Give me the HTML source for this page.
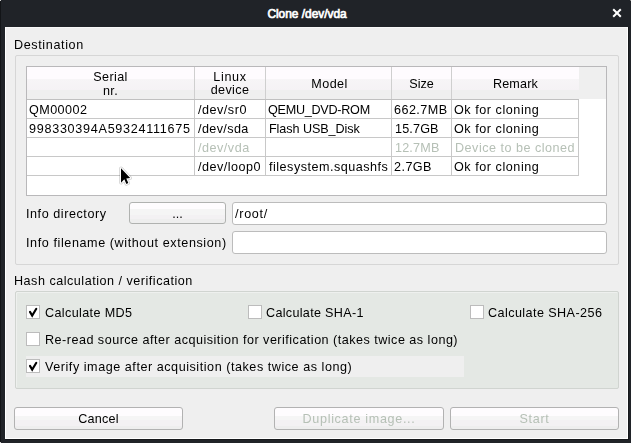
<!DOCTYPE html>
<html><head><meta charset="utf-8"><style>
html,body{margin:0;padding:0;}
body{width:631px;height:443px;background:#202328;position:relative;overflow:hidden;font-family:"Liberation Sans",sans-serif;}
.b{position:absolute;}
#title{will-change:auto;}
.t{will-change:transform;position:absolute;white-space:pre;line-height:14px;font-size:12px;}
</style></head><body>
<div class="b" style="left:5px;top:27px;width:623px;height:412px;background:#efefef;border-left:1px solid #fff;border-top:1px solid #f8f8f8;border-right:1px solid #fff;border-bottom:1px solid #fff;box-sizing:border-box;"></div>
<div class="b" style="left:0px;top:0px;width:1px;height:443px;background:#121417;"></div>
<div class="b" style="left:628px;top:27px;width:1px;height:413px;background:#16181b;"></div>
<div class="b" style="left:5px;top:439px;width:624px;height:1px;background:#16181b;"></div>
<div class="b" style="left:0px;top:0px;width:1px;height:1px;background:#d0d0d0;"></div>
<div class="b" style="left:0px;top:442px;width:1px;height:1px;background:#d0d0d0;"></div>
<div class="b" style="left:630px;top:0px;width:1px;height:1px;background:#808080;"></div>
<div class="b" style="left:15px;top:55px;width:604px;height:210px;border:1px solid #d6d6d6;border-radius:2px;box-sizing:border-box;"></div>
<div class="b" style="left:26px;top:66px;width:581px;height:130px;border:1px solid #b9b8ba;box-sizing:border-box;background:#fff;"></div>
<div class="b" style="left:27px;top:67px;width:579px;height:32px;background:#efefef;"></div>
<div class="b" style="left:27px;top:67px;width:167px;height:32px;background:linear-gradient(#fefbfe 0px,#fefbfe 12px,#f7f5f7 12px,#f5f2f5 23px,#efefef 23px);"></div>
<div class="b" style="left:194px;top:67px;width:1px;height:32px;background:#cfcfcf;"></div>
<div class="b" style="left:195px;top:67px;width:70px;height:32px;background:linear-gradient(#fefbfe 0px,#fefbfe 12px,#f7f5f7 12px,#f5f2f5 23px,#efefef 23px);"></div>
<div class="b" style="left:265px;top:67px;width:1px;height:32px;background:#cfcfcf;"></div>
<div class="b" style="left:266px;top:67px;width:125px;height:32px;background:linear-gradient(#fefbfe 0px,#fefbfe 12px,#f7f5f7 12px,#f5f2f5 23px,#efefef 23px);"></div>
<div class="b" style="left:391px;top:67px;width:1px;height:32px;background:#cfcfcf;"></div>
<div class="b" style="left:392px;top:67px;width:59px;height:32px;background:linear-gradient(#fefbfe 0px,#fefbfe 12px,#f7f5f7 12px,#f5f2f5 23px,#efefef 23px);"></div>
<div class="b" style="left:451px;top:67px;width:1px;height:32px;background:#cfcfcf;"></div>
<div class="b" style="left:452px;top:67px;width:127px;height:32px;background:linear-gradient(#fefbfe 0px,#fefbfe 12px,#f7f5f7 12px,#f5f2f5 23px,#efefef 23px);"></div>
<div class="b" style="left:27px;top:99px;width:552px;height:1px;background:#c0c0c0;"></div>
<div class="b" style="left:27px;top:118px;width:552px;height:1px;background:#c8c8c8;"></div>
<div class="b" style="left:27px;top:137px;width:552px;height:1px;background:#c8c8c8;"></div>
<div class="b" style="left:27px;top:156px;width:552px;height:1px;background:#c8c8c8;"></div>
<div class="b" style="left:27px;top:175px;width:552px;height:1px;background:#c8c8c8;"></div>
<div class="b" style="left:194px;top:100px;width:1px;height:76px;background:#c8c8c8;"></div>
<div class="b" style="left:265px;top:100px;width:1px;height:76px;background:#c8c8c8;"></div>
<div class="b" style="left:391px;top:100px;width:1px;height:76px;background:#c8c8c8;"></div>
<div class="b" style="left:451px;top:100px;width:1px;height:76px;background:#c8c8c8;"></div>
<div class="b" style="left:578px;top:100px;width:1px;height:76px;background:#c8c8c8;"></div>
<div class="b" style="left:129px;top:202px;width:97px;height:22px;border:1px solid #b0b2b0;border-radius:3px;box-sizing:border-box;background:linear-gradient(#fefcfe 0,#fefcfe 32%,#f5f5f5 32%,#f5f5f5 58%,#f3f1f3 58%,#f3f1f3 80%,#eeeeee 80%);"></div>
<div class="b" style="left:232px;top:202px;width:375px;height:23px;border:1px solid #bcbcbc;border-radius:3px;box-sizing:border-box;background:#fff;"></div>
<div class="b" style="left:232px;top:231px;width:375px;height:23px;border:1px solid #bcbcbc;border-radius:3px;box-sizing:border-box;background:#fff;"></div>
<div class="b" style="left:15px;top:291px;width:604px;height:98px;border:1px solid #d0d4d0;border-radius:2px;box-sizing:border-box;background:#e4e8e4;box-shadow:inset 1px 1px 0 #eef0ee;"></div>
<div class="b" style="left:26px;top:356px;width:438px;height:21px;background:#efefef;"></div>
<div class="b" style="left:26px;top:305px;width:14px;height:14px;border:1px solid #bcbcbc;box-sizing:border-box;background:#fff;"></div><svg class="b" style="left:26px;top:305px" width="14" height="14" viewBox="0 0 14 14"><path d="M4 6.9 L6.2 10.6 L10.3 3.8" fill="none" stroke="#000" stroke-width="2.1" stroke-linecap="round" stroke-linejoin="miter"/></svg>
<div class="b" style="left:248px;top:305px;width:14px;height:14px;border:1px solid #bcbcbc;box-sizing:border-box;background:#fff;"></div>
<div class="b" style="left:470px;top:305px;width:14px;height:14px;border:1px solid #bcbcbc;box-sizing:border-box;background:#fff;"></div>
<div class="b" style="left:26px;top:332px;width:14px;height:14px;border:1px solid #bcbcbc;box-sizing:border-box;background:#fff;"></div>
<div class="b" style="left:26px;top:359px;width:14px;height:14px;border:1px solid #bcbcbc;box-sizing:border-box;background:#fff;"></div><svg class="b" style="left:26px;top:359px" width="14" height="14" viewBox="0 0 14 14"><path d="M4 6.9 L6.2 10.6 L10.3 3.8" fill="none" stroke="#000" stroke-width="2.1" stroke-linecap="round" stroke-linejoin="miter"/></svg>
<div class="b" style="left:14px;top:407px;width:169px;height:23px;border:1px solid #b2b2b2;border-radius:3px;box-sizing:border-box;background:linear-gradient(#fefcfe 0,#fefcfe 37%,#f5f5f5 37%,#f5f5f5 59%,#f3f1f3 59%,#f3f1f3 84%,#eeeeee 84%);"></div>
<div class="b" style="left:274px;top:407px;width:170px;height:23px;border:1px solid #b2b2b2;border-radius:3px;box-sizing:border-box;background:linear-gradient(#fefcfe 0,#fefcfe 37%,#f5f5f5 37%,#f5f5f5 59%,#f3f1f3 59%,#f3f1f3 84%,#eeeeee 84%);"></div>
<div class="b" style="left:450px;top:407px;width:169px;height:23px;border:1px solid #b2b2b2;border-radius:3px;box-sizing:border-box;background:linear-gradient(#fefcfe 0,#fefcfe 37%,#f5f5f5 37%,#f5f5f5 59%,#f3f1f3 59%,#f3f1f3 84%,#eeeeee 84%);"></div>
<svg class="b" style="left:611px;top:7px" width="12" height="12" viewBox="0 0 12 12"><path d="M2.2 2.2 L9.8 9.8 M9.8 2.2 L2.2 9.8" stroke="#fff" stroke-width="2" stroke-linecap="butt"/></svg>
<svg class="b" style="left:115px;top:162px" width="24" height="28" viewBox="0 0 24 28"><path d="M6 6.3 L6 20.8 L9.3 17.3 L11.4 21.9 L13.3 21 L11.3 16.5 L15.2 16 Z" fill="none" stroke="rgba(0,0,0,0.18)" stroke-width="3.6" stroke-linejoin="round"/><path d="M6 6.3 L6 20.8 L9.3 17.3 L11.4 21.9 L13.3 21 L11.3 16.5 L15.2 16 Z" fill="#000" stroke="#fff" stroke-width="2" paint-order="stroke" stroke-linejoin="round"/></svg>
<div class="t" id="title" style="top:7.00px;color:#fff;font-size:11.9px;font-weight:normal;-webkit-text-stroke:0.7px #fff;left:267.40px;">Clone /dev/vda</div>
<div class="t" id="dest" style="top:38.00px;color:#000;font-size:12.6px;font-weight:normal;letter-spacing:0.620px;left:14.00px;">Destination</div>
<div class="t" id="h_serial" style="top:69.50px;color:#000;font-size:12.6px;font-weight:normal;letter-spacing:0.360px;left:27.00px;width:167px;text-align:center;">Serial</div>
<div class="t" id="h_nr" style="top:84.00px;color:#000;font-size:12.6px;font-weight:normal;letter-spacing:0.400px;left:27.40px;width:167px;text-align:center;">nr.</div>
<div class="t" id="h_linux" style="top:70.00px;color:#000;font-size:12.6px;font-weight:normal;letter-spacing:0.650px;left:195.40px;width:70px;text-align:center;">Linux</div>
<div class="t" id="h_device" style="top:83.00px;color:#000;font-size:12.6px;font-weight:normal;letter-spacing:0.360px;left:195.00px;width:70px;text-align:center;">device</div>
<div class="t" id="h_model" style="top:77.00px;color:#000;font-size:12.6px;font-weight:normal;letter-spacing:0.425px;left:266.85px;width:125px;text-align:center;">Model</div>
<div class="t" id="h_size" style="top:77.00px;color:#000;font-size:12.6px;font-weight:normal;left:392.00px;width:59px;text-align:center;">Size</div>
<div class="t" id="h_remark" style="top:77.00px;color:#000;font-size:12.6px;font-weight:normal;letter-spacing:0.180px;left:452.45px;width:127px;text-align:center;">Remark</div>
<div class="t" id="r0c0" style="top:103.00px;color:#000;font-size:12.6px;font-weight:normal;letter-spacing:0.433px;left:29.10px;">QM00002</div>
<div class="t" id="r0c1" style="top:103.00px;color:#000;font-size:12.6px;font-weight:normal;letter-spacing:0.514px;left:197.50px;">/dev/sr0</div>
<div class="t" id="r0c2" style="top:103.00px;color:#000;font-size:12.6px;font-weight:normal;letter-spacing:-0.255px;left:268.10px;">QEMU_DVD-ROM</div>
<div class="t" id="r0c3" style="top:103.00px;color:#000;font-size:12.6px;font-weight:normal;letter-spacing:0.450px;left:394.05px;">662.7MB</div>
<div class="t" id="r0c4" style="top:103.00px;color:#000;font-size:12.6px;font-weight:normal;letter-spacing:0.546px;left:454.45px;">Ok for cloning</div>
<div class="t" id="r1c0" style="top:122.00px;color:#000;font-size:12.6px;font-weight:normal;letter-spacing:0.720px;left:28.70px;">998330394A59324111675</div>
<div class="t" id="r1c1" style="top:122.00px;color:#000;font-size:12.6px;font-weight:normal;letter-spacing:0.386px;left:197.95px;">/dev/sda</div>
<div class="t" id="r1c2" style="top:122.00px;color:#000;font-size:12.6px;font-weight:normal;letter-spacing:-0.069px;left:268.95px;">Flash USB_Disk</div>
<div class="t" id="r1c3" style="top:122.00px;color:#000;font-size:12.6px;font-weight:normal;letter-spacing:0.160px;left:395.00px;">15.7GB</div>
<div class="t" id="r1c4" style="top:122.00px;color:#000;font-size:12.6px;font-weight:normal;letter-spacing:0.546px;left:454.45px;">Ok for cloning</div>
<div class="t" id="r2c1" style="top:141.00px;color:#b6c0b6;font-size:12.6px;font-weight:normal;letter-spacing:0.514px;left:197.50px;">/dev/vda</div>
<div class="t" id="r2c3" style="top:141.00px;color:#b6c0b6;font-size:12.6px;font-weight:normal;letter-spacing:0.180px;left:394.95px;">12.7MB</div>
<div class="t" id="r2c4" style="top:141.00px;color:#b6c0b6;font-size:12.6px;font-weight:normal;letter-spacing:0.494px;left:455.35px;">Device to be cloned</div>
<div class="t" id="r3c1" style="top:160.00px;color:#000;font-size:12.6px;font-weight:normal;letter-spacing:0.500px;left:197.95px;">/dev/loop0</div>
<div class="t" id="r3c2" style="top:160.00px;color:#000;font-size:12.6px;font-weight:normal;letter-spacing:0.500px;left:268.50px;">filesystem.squashfs</div>
<div class="t" id="r3c3" style="top:160.00px;color:#000;font-size:12.6px;font-weight:normal;letter-spacing:0.450px;left:393.70px;">2.7GB</div>
<div class="t" id="r3c4" style="top:160.00px;color:#000;font-size:12.6px;font-weight:normal;letter-spacing:0.546px;left:454.45px;">Ok for cloning</div>
<div class="t" id="info_dir" style="top:207.00px;color:#000;font-size:12.6px;font-weight:normal;letter-spacing:0.554px;left:26.00px;">Info directory</div>
<div class="t" id="dots" style="top:207.00px;color:#000;font-size:12.6px;font-weight:normal;left:129.00px;width:97px;text-align:center;">...</div>
<div class="t" id="root" style="top:207.00px;color:#000;font-size:12.6px;font-weight:normal;letter-spacing:0.720px;left:235.00px;">/root/</div>
<div class="t" id="info_fn" style="top:236.00px;color:#000;font-size:12.6px;font-weight:normal;letter-spacing:0.588px;left:26.40px;">Info filename (without extension)</div>
<div class="t" id="hash" style="top:274.00px;color:#000;font-size:12.6px;font-weight:normal;letter-spacing:0.507px;left:14.40px;">Hash calculation / verification</div>
<div class="t" id="md5" style="top:306.00px;color:#000;font-size:12.6px;font-weight:normal;letter-spacing:0.375px;left:45.05px;">Calculate MD5</div>
<div class="t" id="sha1" style="top:306.00px;color:#000;font-size:12.6px;font-weight:normal;letter-spacing:0.307px;left:266.05px;">Calculate SHA-1</div>
<div class="t" id="sha256" style="top:306.00px;color:#000;font-size:12.6px;font-weight:normal;letter-spacing:0.425px;left:488.30px;">Calculate SHA-256</div>
<div class="t" id="reread" style="top:333.00px;color:#000;font-size:12.6px;font-weight:normal;letter-spacing:0.484px;left:44.75px;">Re-read source after acquisition for verification (takes twice as long)</div>
<div class="t" id="verify" style="top:360.00px;color:#000;font-size:12.6px;font-weight:normal;letter-spacing:0.539px;left:45.15px;">Verify image after acquisition (takes twice as long)</div>
<div class="t" id="cancel" style="top:412.00px;color:#000;font-size:12.6px;font-weight:normal;letter-spacing:0.180px;left:14.45px;width:169px;text-align:center;">Cancel</div>
<div class="t" id="dup" style="top:412.00px;color:#b6c0b6;font-size:12.6px;font-weight:normal;letter-spacing:0.671px;left:274.40px;width:170px;text-align:center;">Duplicate image...</div>
<div class="t" id="start" style="top:412.00px;color:#b6c0b6;font-size:12.6px;font-weight:normal;letter-spacing:0.650px;left:450.40px;width:169px;text-align:center;">Start</div>
</body></html>
